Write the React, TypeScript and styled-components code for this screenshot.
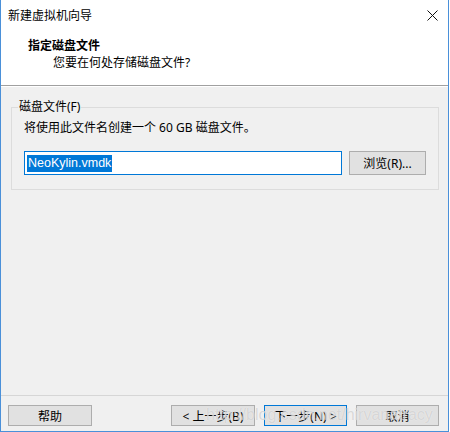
import React from 'react'
import styled, { createGlobalStyle } from 'styled-components'

const GlobalStyle = createGlobalStyle`
  html, body {
    margin: 0;
    padding: 0;
    background: #ffffff;
  }
  body {
    font-family: "Noto Sans", "Noto Sans CJK SC", sans-serif;
    font-size: 12px;
    color: #000;
  }
`

const Window = styled.div`
  position: relative;
  width: 449px;
  height: 432px;
  box-sizing: border-box;
  border: 1px solid #4a90d9;
  border-top: none;
  background: #f0f0f0;
  display: flex;
  flex-direction: column;
  overflow: hidden;
`

const TitleBar = styled.div`
  height: 30px;
  background: #ffffff;
  display: flex;
  align-items: center;
  justify-content: space-between;
  padding: 0 10px 0 7px;
`

const Title = styled.span`
  font-size: 12px;
  color: #000;
`

const CloseIcon = () => (
  <svg width="11" height="11" viewBox="0 0 11 11">
    <path d="M0.5 0.5 L10.5 10.5 M10.5 0.5 L0.5 10.5" stroke="#111" strokeWidth="1" />
  </svg>
)

const Header = styled.div`
  height: 56px;
  background: #ffffff;
  border-bottom: 1px solid #a0a0a0;
  box-shadow: 0 1px 0 #ffffff;
  padding: 7px 0 0 27px;
  box-sizing: border-box;
`

const HeaderTitle = styled.div`
  font-weight: bold;
  font-size: 12px;
  line-height: 17px;
`

const HeaderSub = styled.div`
  margin-left: 25px;
  line-height: 17px;
`

const Body = styled.div`
  flex: 1;
  padding: 14px 10px 0 10px;
`

const Group = styled.fieldset`
  margin: 0;
  height: 90px;
  box-sizing: border-box;
  border: 1px solid #dcdcdc;
  padding: 0 12px;
`

const Legend = styled.legend`
  padding: 0 1px;
  margin-left: -6px;
  font-size: 12px;
  line-height: 14px;
`

const Info = styled.div`
  margin-top: 6px;
  line-height: 16px;
`

const FileRow = styled.div`
  display: flex;
  align-items: center;
  margin-top: 15px;
  gap: 7px;
`

const FileInput = styled.div`
  width: 318px;
  height: 24px;
  box-sizing: border-box;
  background: #ffffff;
  border: 1px solid #0078d7;
  padding: 2px;
  display: flex;
  align-items: center;
`

const Selected = styled.span`
  background: #0078d7;
  color: #ffffff;
  line-height: 17px;
  padding: 0 1px;
  font-family: "Liberation Sans", "Noto Sans CJK SC", sans-serif;
  font-size: 12.5px;
`

const Button = styled.button<{ $focused?: boolean; $width: number; $height?: number }>`
  box-sizing: border-box;
  width: ${(p) => p.$width}px;
  height: ${(p) => p.$height ?? 21}px;
  background: #e1e1e1;
  border: 1px solid ${(p) => (p.$focused ? '#0078d7' : '#adadad')};
  font-family: "Noto Sans", "Noto Sans CJK SC", sans-serif;
  font-size: 12px;
  color: #000;
  padding: 0;
  display: flex;
  align-items: center;
  justify-content: center;
`

const Footer = styled.div`
  border-top: 1px solid #d6d6d6;
  height: 36px;
  box-sizing: border-box;
  padding: 9px 9px 0 7px;
  display: flex;
  align-items: flex-start;
`

const FooterRight = styled.div`
  margin-left: auto;
  display: flex;
  gap: 9px;
`

const Watermark = styled.div`
  position: absolute;
  left: 205px;
  top: 405px;
  font-family: "Liberation Sans", sans-serif;
  font-size: 16px;
  line-height: 20px;
  color: rgba(185, 185, 185, 0.55);
  text-shadow: 0 0 1px rgba(255, 255, 255, 0.9);
  pointer-events: none;
  white-space: nowrap;
`

export default function App() {
  return (
    <>
      <GlobalStyle />
      <Window>
        <TitleBar>
          <Title>新建虚拟机向导</Title>
          <CloseIcon />
        </TitleBar>
        <Header>
          <HeaderTitle>指定磁盘文件</HeaderTitle>
          <HeaderSub>您要在何处存储磁盘文件?</HeaderSub>
        </Header>
        <Body>
          <Group>
            <Legend>磁盘文件(F)</Legend>
            <Info>将使用此文件名创建一个 60 GB 磁盘文件。</Info>
            <FileRow>
              <FileInput>
                <Selected>NeoKylin.vmdk</Selected>
              </FileInput>
              <Button $width={77} $height={24}>浏览(R)...</Button>
            </FileRow>
          </Group>
        </Body>
        <Footer>
          <Button $width={84}>帮助</Button>
          <FooterRight>
            <Button $width={84}>&lt; 上一步(B)</Button>
            <Button $width={83} $focused>下一步(N) &gt;</Button>
            <Button $width={83}>取消</Button>
          </FooterRight>
        </Footer>
        <Watermark>http://blog.csdn.net/hirvanatracy</Watermark>
      </Window>
    </>
  )
}
